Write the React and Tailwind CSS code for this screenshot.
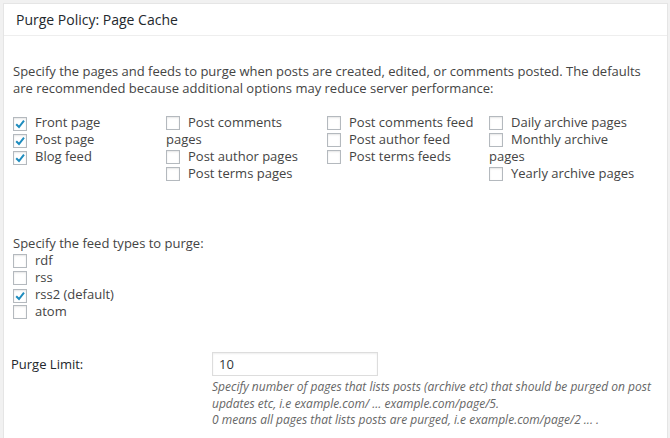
import React from "react";

function Box({ checked }) {
    return (
        <span className="inline-flex align-[-3px] w-[14px] h-[14px] mr-[8px] items-center justify-center border border-[#b4b9be] bg-white shadow-[inset_0_1px_2px_rgba(0,0,0,0.1)]">
            {checked && (
                <svg width="12" height="12" viewBox="0 0 12 12">
                    <path
                        d="M2.2 6.2 L5 9 L10 2.6"
                        fill="none"
                        stroke="#1e8cbe"
                        strokeWidth="2"
                    />
                </svg>
            )}
        </span>
    );
}

function Check({ checked, children }) {
    return (
        <div className="leading-[17px]">
            <Box checked={checked} />
            {children}
        </div>
    );
}

export default function App() {
    const font = { fontFamily: '"Open Sans", sans-serif' };
    return (
        <div
            className="min-h-screen bg-[#f1f1f1] pt-[3px] pl-[3px] pr-[2px] text-[13px] text-[#444]"
            style={font}
        >
            <div className="bg-white border border-[#e5e5e5] min-h-[440px]">
                <div className="h-[32px] px-[12px] flex items-center border-b border-[#eee] text-[14px] text-[#23282d]">
                    Purge Policy: Page Cache
                </div>
                <div className="px-[9px] pt-[27px]">
                    <p className="leading-[17px] pr-[4px]">
                        Specify the pages and feeds to purge when posts are
                        created, edited, or comments posted. The defaults are
                        recommended because additional options may reduce
                        server performance:
                    </p>

                    <div className="flex mt-[17px]">
                        <div className="w-[153px]">
                            <Check checked>Front page</Check>
                            <Check checked>Post page</Check>
                            <Check checked>Blog feed</Check>
                        </div>
                        <div className="w-[161px]">
                            <Check>
                                Post comments
                                <br />
                                pages
                            </Check>
                            <Check>Post author pages</Check>
                            <Check>Post terms pages</Check>
                        </div>
                        <div className="w-[162px]">
                            <Check>Post comments feed</Check>
                            <Check>Post author feed</Check>
                            <Check>Post terms feeds</Check>
                        </div>
                        <div className="whitespace-nowrap">
                            <Check>Daily archive pages</Check>
                            <Check>
                                Monthly archive
                                <br />
                                pages
                            </Check>
                            <Check>Yearly archive pages</Check>
                        </div>
                    </div>

                    <p className="leading-[17px] mt-[53px]">
                        Specify the feed types to purge:
                    </p>
                    <Check>rdf</Check>
                    <Check>rss</Check>
                    <Check checked>rss2 (default)</Check>
                    <Check>atom</Check>

                    <div className="flex mt-[32px]">
                        <div className="w-[201px] -ml-[2px] pt-[4px] leading-[17px] text-[#23282d]">
                            Purge Limit:
                        </div>
                        <div>
                            <div className="w-[166px] h-[24px] border border-[#ddd] shadow-[inset_0_1px_2px_rgba(0,0,0,0.07)] px-[6px] leading-[22px] text-[#32373c]">
                                10
                            </div>
                            <p className="mt-[3px] text-[12px] italic leading-[16.5px] text-[#666]">
                                Specify number of pages that lists posts
                                (archive etc) that should be purged on post
                                <br />
                                updates etc, i.e example.com/ ...
                                example.com/page/5.
                                <br />0 means all pages that lists posts are
                                purged, i.e example.com/page/2 ... .
                            </p>
                        </div>
                    </div>
                </div>
            </div>
        </div>
    );
}
